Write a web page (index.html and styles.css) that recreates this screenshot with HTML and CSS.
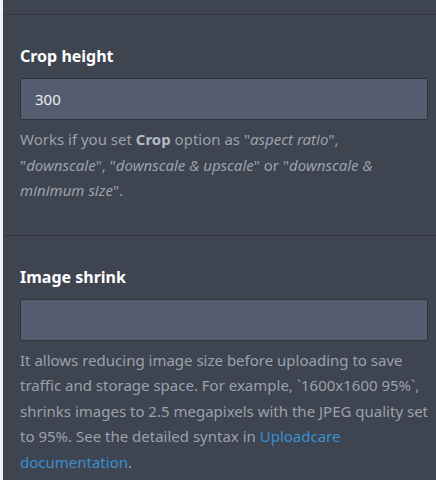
FILE: index.html
```html
<!DOCTYPE html>
<html lang="en">
<head>
    <meta charset="UTF-8">
    <meta name="viewport" content="width=device-width, initial-scale=1.0">
    <title>Settings</title>
    <link rel="stylesheet" href="styles.css">
</head>
<body>

    <div class="panel">
        <div class="section section-top"></div>

        <div class="section">
            <label class="field-label" for="crop-height">Crop height</label>
            <input class="field-input" id="crop-height" type="text" value="300">
            <p class="field-help">Works if you set <b>Crop</b> option as "<i>aspect ratio</i>", "<i>downscale</i>", "<i>downscale &amp; upscale</i>" or "<i>downscale &amp; minimum size</i>".</p>
        </div>

        <div class="section">
            <label class="field-label" for="image-shrink">Image shrink</label>
            <input class="field-input" id="image-shrink" type="text" value="">
            <p class="field-help">It allows reducing image size before uploading to save traffic and storage space. For example, `1600x1600 95%`, shrinks images to 2.5 megapixels with the JPEG quality set to 95%. See the detailed syntax in <a href="#">Uploadcare documentation</a>.</p>
        </div>
    </div>

</body>
</html>
```

FILE: styles.css
```css
* {
    margin: 0;
    padding: 0;
    box-sizing: border-box;
}
body {
    font-family: 'Noto Sans', 'Open Sans', sans-serif;
    background: #f1f1f5;
    padding-left: 3px;
    height: 100vh;
    overflow: hidden;
}
.panel {
    background: #3e4450;
    min-height: 100%;
}
.section {
    padding: 29px 8px 31px 17px;
    border-bottom: 1px solid #30353e;
}
.section-top {
    height: 15px;
    padding: 0;
}
.field-label {
    display: block;
    color: #fff;
    font-size: 16px;
    font-weight: bold;
    line-height: 24px;
    margin-bottom: 10px;
}
.field-input {
    display: block;
    width: 100%;
    height: 42px;
    padding: 0 14px;
    background: #535d6f;
    border: 1px solid #2e333b;
    border-radius: 2px;
    color: #eceef2;
    font-family: inherit;
    font-size: 15px;
    outline: none;
}
.field-help {
    margin-top: 7px;
    color: #9ba2ad;
    font-size: 15px;
    line-height: 25.5px;
}
.field-help b {
    color: #b4bac4;
}
.field-help a {
    color: #3a8fd0;
    text-decoration: none;
}
```
